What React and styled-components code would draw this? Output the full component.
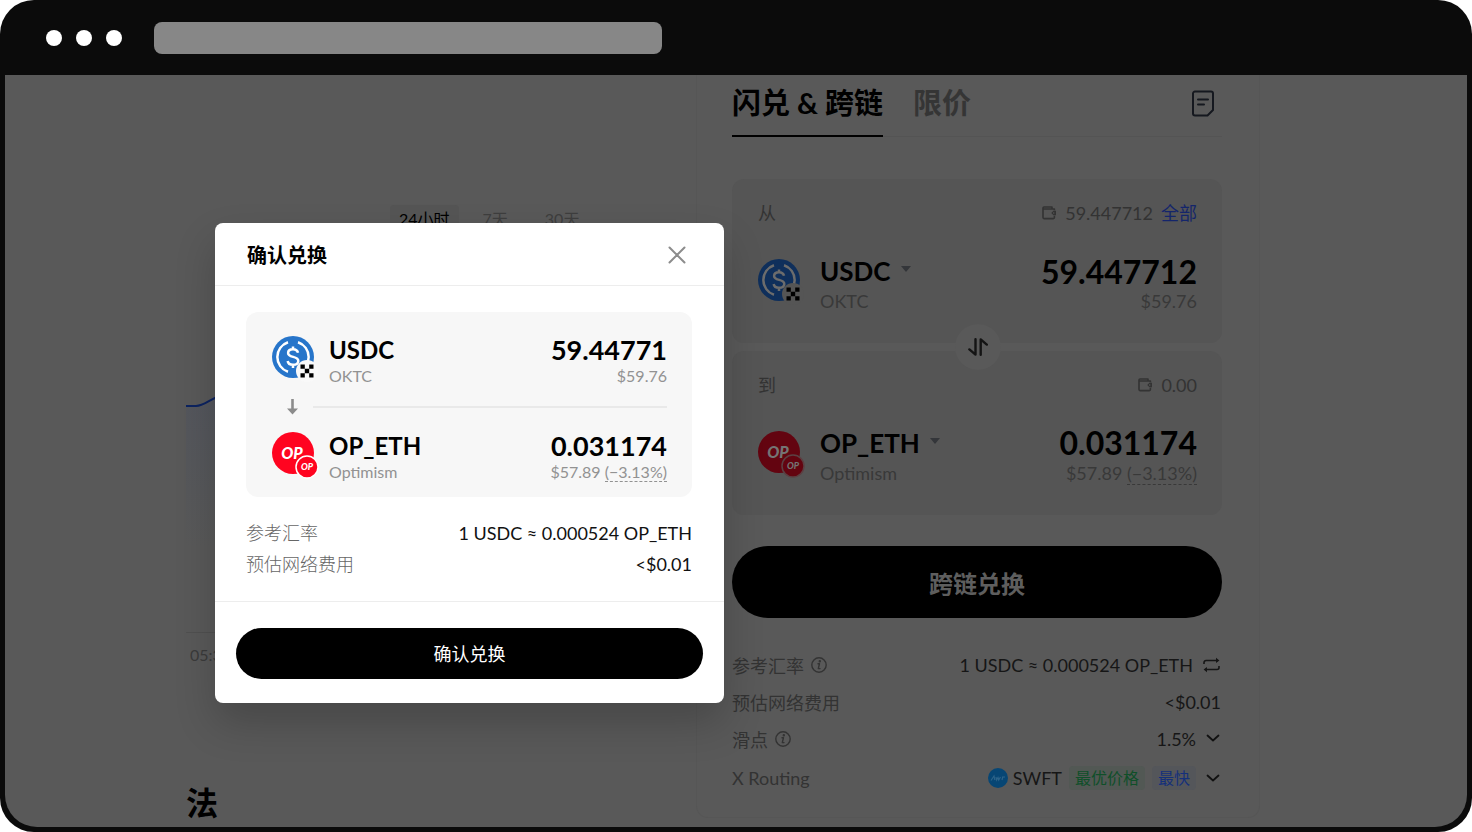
import React, { useState } from 'react';
import styled, { createGlobalStyle } from 'styled-components';

const GlobalStyle = createGlobalStyle`
    * {
        box-sizing: border-box;
    }
    body {
        background: #fff;
        color: #000;
        font-family: Lato, "Noto Sans CJK SC", sans-serif;
        margin: 0;
    }
    button, input {
        background: none;
        border: 0;
        color: inherit;
        font: inherit;
        margin: 0;
        padding: 0;
    }
    button {
        cursor: pointer;
    }
    svg {
        display: block;
        flex: none;
    }
`;

/* Browser frame */
const StyledBrowser = styled.div`
    background: #0b0b0b;
    border-radius: 34px;
    display: flex;
    flex-direction: column;
    height: 100vh;
    overflow: hidden;
    padding: 0 5px 5px;
`;
const StyledTitleBar = styled.header`
    align-items: center;
    display: flex;
    flex: none;
    gap: 14px;
    height: 75px;
    padding-left: 41px;
`;
const StyledDot = styled.span`
    background: #fff;
    border-radius: 50%;
    height: 16px;
    width: 16px;
`;
const StyledAddress = styled.input`
    && {
        background: #878787;
        border-radius: 8px;
        height: 32px;
        margin-left: 18px;
        width: 508px;
    }
`;
const StyledScreen = styled.main`
    background: #595959;
    border-radius: 0 0 32px 32px;
    display: grid;
    flex: 1;
    grid-template-columns: 1fr 564px;
    min-height: 0;
    overflow: hidden;
    padding: 0 207px 0 181px;
    position: relative;
`;

/* Price chart */
const StyledChart = styled.section`
    display: flex;
    flex-direction: column;
    padding-top: 130px;
`;
const StyledPeriods = styled.div`
    display: flex;
    gap: 11px;
    margin-bottom: 129px;
    padding-left: 204px;
`;
const StyledPeriod = styled.button`
    && {
        background: ${props => (props.$active ? '#555' : 'none')};
        border-radius: 4px;
        color: ${props => (props.$active ? '#000' : '#3e3e3e')};
        font-size: 16px;
        line-height: 28px;
        padding: 0 ${props => (props.$active ? 9 : 13)}px;
    }
`;
const StyledAxis = styled.div`
    border-top: 1px solid #505050;
    color: #3b3b3b;
    display: flex;
    font-size: 16px;
    justify-content: space-between;
    line-height: 24px;
    padding: 10px 4px 0;
`;
const StyledHeading = styled.h2`
    font-size: 32px;
    font-weight: 700;
    line-height: 40px;
    margin: 116px 0 0;
`;

/* Swap widget */
const StyledWidget = styled.section`
    align-self: start;
    border: 1px solid #565656;
    border-radius: 0 0 12px 12px;
    border-top: 0;
    padding: 0 37px 18px 35px;
`;
const StyledTabs = styled.div`
    align-items: flex-start;
    border-bottom: 1px solid #545454;
    display: flex;
    gap: 30px;
    padding-top: 10px;
`;
const StyledTab = styled.button`
    && {
        border-bottom: 2px solid ${props => (props.$active ? '#000' : 'transparent')};
        color: ${props => (props.$active ? '#000' : '#353535')};
        font-size: 29px;
        font-weight: 700;
        line-height: 36px;
        margin-bottom: -1px;
        padding-bottom: 14px;
    }
`;
const StyledOrders = styled.button`
    && {
        margin: 5px 8px 0 auto;
    }
`;
const StyledPanels = styled.div`
    display: flex;
    flex-direction: column;
    gap: 8px;
    padding-top: 42px;
    position: relative;
`;
const StyledPanel = styled.div`
    background: #555;
    border-radius: 12px;
    padding: 22px 25px 28px 26px;
`;
const StyledPanelTop = styled.div`
    align-items: center;
    color: #333;
    display: flex;
    font-size: 18px;
    justify-content: space-between;
    line-height: 24px;
    margin-bottom: 30px;
`;
const StyledBalance = styled.span`
    align-items: center;
    display: flex;
    gap: 8px;
`;
const StyledAll = styled.button`
    && {
        color: #14256b;
    }
`;
const StyledSwitch = styled.button`
    && {
        align-items: center;
        background: #595959;
        border-radius: 50%;
        display: flex;
        height: 46px;
        justify-content: center;
        left: calc(50% - 22px);
        position: absolute;
        top: 187px;
        width: 46px;
    }
`;
const StyledSubmit = styled.button`
    && {
        background: #000;
        border-radius: 36px;
        color: #5e5e5e;
        font-size: 24px;
        font-weight: 700;
        height: 72px;
        margin: 31px 0 28px;
        width: 100%;
    }
`;
const StyledInfoRow = styled.div`
    align-items: center;
    color: #333;
    display: flex;
    font-size: 18px;
    height: 37px;
    justify-content: space-between;

    &:last-child {
        height: 42px;
    }
`;
const StyledInfoLabel = styled.span`
    align-items: center;
    display: flex;
    gap: 7px;
`;
const StyledInfoValue = styled.span`
    align-items: center;
    color: #161616;
    display: flex;
    gap: 10px;
    padding-right: ${props => (props.$icon ? 2 : 1)}px;

    button {
        align-items: center;
        display: flex;
        gap: 10px;
    }
`;
const StyledRoute = styled.span`
    align-items: center;
    display: flex;
    gap: 7px;
`;
const StyledProvider = styled.span`
    align-items: center;
    display: flex;
    gap: 5px;
`;
const StyledTag = styled.span`
    background: ${props => props.$background};
    border-radius: 4px;
    color: ${props => props.$color};
    font-size: 16px;
    line-height: 24px;
    padding: 0 6px;
`;

/* Token line, used by the widget and by the dialog */
const StyledToken = styled.div`
    display: flex;
    gap: ${props => (props.$large ? 20 : 15)}px;
`;
const StyledTokenIcon = styled.div`
    padding-top: ${props => (props.$large ? 4 : 0)}px;
    width: 42px;

    svg {
        overflow: visible;
    }
`;
const StyledTokenText = styled.div`
    align-items: ${props => (props.$end ? 'flex-end' : 'flex-start')};
    display: flex;
    flex: 1;
    flex-direction: column;
    min-width: 0;
`;
const StyledName = styled.span`
    align-items: center;
    display: flex;
    font-size: ${props => (props.$large ? 26 : 24)}px;
    font-weight: 700;
    gap: 10px;
    line-height: ${props => (props.$large ? 32 : 28)}px;
`;
const StyledAmount = styled.span`
    font-size: ${props => (props.$large ? 32 : 27)}px;
    font-weight: 700;
    line-height: ${props => (props.$large ? 32 : 28)}px;

    input {
        display: block;
        height: 32px;
        text-align: right;
        width: 200px;
    }
`;
const StyledSub = styled.span`
    color: ${props => (props.$large ? '#393939' : '#929292')};
    font-size: ${props => (props.$large ? 18 : 16)}px;
    line-height: ${props => (props.$large ? 28 : 24)}px;
`;
const StyledChange = styled.span`
    border-bottom: 1px dashed currentColor;
`;

/* Confirm dialog */
const StyledDialog = styled.div`
    background: #fff;
    border-radius: 8px;
    box-shadow: 0 20px 40px rgba(0, 0, 0, 0.2);
    left: 210px;
    position: absolute;
    top: 148px;
    width: 509px;
`;
const StyledDialogHeader = styled.div`
    align-items: center;
    border-bottom: 1px solid #ededed;
    display: flex;
    height: 63px;
    justify-content: space-between;
    padding: 2px 38px 0 32px;

    h3 {
        font-size: 20px;
        font-weight: 700;
        line-height: 28px;
        margin: 0;
    }
`;
const StyledDialogBody = styled.div`
    padding: 26px 32px 21px 31px;
`;
const StyledSummary = styled.div`
    background: #f7f7f7;
    border-radius: 12px;
    margin-bottom: 21px;
    padding: 24px 25px 13px 26px;
`;
const StyledDivider = styled.div`
    align-items: center;
    display: flex;
    gap: 14px;
    height: 44px;
    padding: 0 0 6px 14px;

    &::after {
        background: #e9e9e9;
        content: '';
        flex: 1;
        height: 2px;
    }
`;
const StyledDialogRow = styled.div`
    color: #111;
    display: flex;
    font-size: 18px;
    justify-content: space-between;
    line-height: 31px;
`;
const StyledDialogLabel = styled.span`
    color: #666;
    font-weight: 300;
`;
const StyledDialogFooter = styled.div`
    border-top: 1px solid #ededed;
    padding: 26px 21px 24px;
`;
const StyledConfirm = styled.button`
    && {
        background: #000;
        border-radius: 26px;
        color: #fff;
        font-size: 18px;
        height: 51px;
        padding-bottom: 2px;
        width: 100%;
    }
`;

const CloseIcon = () => (
    <svg width="18" height="18" viewBox="0 0 18 18" fill="none" stroke="#8c8c8c" strokeWidth="2" strokeLinecap="round">
        <path d="M1.5 1.5l15 15M16.5 1.5l-15 15" />
    </svg>
);

const OrdersIcon = () => (
    <svg width="22" height="27" viewBox="0 0 22 27" fill="none" stroke="#15181f" strokeWidth="2" strokeLinecap="round" strokeLinejoin="round">
        <path d="M3 1.5h16a2 2 0 0 1 2 2V20l-5.5 5.5H3a2 2 0 0 1-2-2v-20a2 2 0 0 1 2-2z" />
        <path d="M6 9.5h10M6 14.5h6" />
    </svg>
);

const WalletIcon = () => (
    <svg width="15" height="14" viewBox="0 0 15 14" fill="none" stroke="#333" strokeWidth="1.6" strokeLinejoin="round">
        <path d="M12.4 4.2V3H10V1H2a1 1 0 0 0-1 1v9.6a1 1 0 0 0 1 1h9.4a1 1 0 0 0 1-1V9.8M1.3 3H10" />
        <path d="M14 4.8h-2.6L9.3 7l2.1 2.2H14z" fill="#333" stroke="none" />
        <circle cx="11.7" cy="7" r=".8" fill="#555" stroke="none" />
    </svg>
);

const SwitchIcon = () => (
    <svg width="20" height="18" viewBox="0 0 20 18" fill="none" stroke="#141414" strokeWidth="2.4" strokeLinecap="round" strokeLinejoin="round">
        <path d="M7.5 1.2v15.4L1.4 11.4" />
        <path d="M12.7 16.8V1.4l6.1 5.2" />
    </svg>
);

const InfoIcon = () => (
    <svg width="16" height="16" viewBox="0 0 16 16" fill="none" stroke="#333" strokeWidth="1.4" strokeLinecap="round" strokeLinejoin="round">
        <circle cx="8" cy="8" r="7.2" />
        <path d="M7 6.7h1.5L7.3 11.6H9" />
        <circle cx="8.8" cy="4.3" r=".5" fill="#333" />
    </svg>
);

const RefreshIcon = () => (
    <svg width="17" height="16" viewBox="0 0 17 16" fill="none" stroke="#161616" strokeWidth="1.6" strokeLinejoin="round">
        <path d="M1 7V5.5a2 2 0 0 1 2-2h12" />
        <path d="M16 9v1.5a2 2 0 0 1-2 2H2" />
        <path d="M13 .8l3.4 2.7L13 6zM4 10L.6 12.5 4 15.2z" fill="#161616" stroke="none" />
    </svg>
);

const ChevronIcon = () => (
    <svg width="14" height="9" viewBox="0 0 14 9" fill="none" stroke="#111" strokeWidth="1.8" strokeLinecap="round" strokeLinejoin="round">
        <path d="M1.5 1.5L7 6.5l5.5-5" />
    </svg>
);

const CaretIcon = () => (
    <svg width="10" height="12" viewBox="0 0 10 12" fill="#34363a">
        <path d="M0 1h10L5 7z" />
    </svg>
);

const ArrowDownIcon = () => (
    <svg width="13" height="16" viewBox="0 0 13 16" fill="#8c8c8c">
        <path d="M5.2 0h2.6v9.5H12L6.5 15.5 1 9.5h4.2z" />
    </svg>
);

const UsdcIcon = ({ dim }) => (
    <svg width="42" height="42" viewBox="0 0 42 42" role="img" aria-label="USDC">
        <circle cx="21" cy="21" r="21" fill={dim ? '#0f2f5b' : '#2775ca'} />
        <g fill="none" stroke={dim ? '#6c6c6c' : '#fff'} strokeWidth="2.5">
            <path d="M16 6.2a15.6 15.6 0 0 0 0 29.600M26 6.2a15.6 15.6 0 0 1 0 29.6" />
            <path d="M26 16.8c-.5-2.3-2.2-3.6-5-3.6-3 0-4.9 1.5-4.9 3.800 0 5.400 10.200 2.400 10.200 8 0 2.400-2.100 3.800-5.300 3.800-3 0-5-1.300-5.300-3.800M21 10.500v3M21 28.500v3.500" />
        </g>
        <circle cx="35" cy="35" r="11" fill={dim ? '#555' : '#f9f9f9'} />
        <path d="M28.500 28.500h4.300v4.300h-4.300zM37.200 28.500h4.300v4.300h-4.300zM32.800 32.800h4.400v4.400h-4.400zM28.500 37.200h4.300v4.300h-4.300zM37.200 37.200h4.300v4.300h-4.300z" />
    </svg>
);

const OpIcon = ({ dim }) => {
    const red = dim ? '#630410' : '#ff0420';
    const white = dim ? '#747474' : '#fff';

    return (
        <svg width="42" height="42" viewBox="0 0 42 42" role="img" aria-label="Optimism" fontFamily="Lato, sans-serif" fontStyle="italic" fontWeight="900" textAnchor="middle">
            <circle cx="21" cy="21" r="21" fill={red} />
            <text x="20" y="27" fontSize="16" fill={white}>OP</text>
            <circle cx="35" cy="35" r="11" fill={red} stroke={dim ? '#5c4043' : '#fff'} strokeWidth="1.5" />
            <text x="35" y="38" fontSize="9" fill={white}>OP</text>
        </svg>
    );
};

const SwftIcon = () => (
    <svg width="20" height="20" viewBox="0 0 20 20">
        <circle cx="10" cy="10" r="10" fill="#074674" />
        <path d="M3 12.5l3-4.500.8 4M8 9l.5 3 1.500-2.500.7 2.500L12.500 9M14.800 9l-.8 3M14 9h3" fill="none" stroke="#2c6389" strokeWidth="1.2" />
    </svg>
);

const PriceLine = () => (
    <svg width="510" height="270" viewBox="0 0 510 270">
        <defs>
            <linearGradient id="area" x1="0" y1="0" x2="0" y2="1">
                <stop offset="0" stopColor="#53565d" />
                <stop offset="1" stopColor="#595959" />
            </linearGradient>
        </defs>
        <path d="M0 44h10c7 0 12-5 19-8l30-20 80 22 90-12 90 25 100-30 91 15v150H0z" fill="url(#area)" />
        <path d="M0 44h10c7 0 12-5 19-8l30-20 80 22 90-12 90 25 100-30 91 15" fill="none" stroke="#0c2360" strokeWidth="2" />
    </svg>
);

const Change = () => <>$57.89 <StyledChange>(−3.13%)</StyledChange></>;

const Token = ({ large, icon, name, network, amount, value }) => (
    <StyledToken $large={large}>
        <StyledTokenIcon $large={large}>{icon}</StyledTokenIcon>
        <StyledTokenText>
            {large ?
                <StyledName as="button" $large>{name}<CaretIcon /></StyledName>
                :
                <StyledName>{name}</StyledName>
            }
            <StyledSub $large={large}>{network}</StyledSub>
        </StyledTokenText>
        <StyledTokenText $end>
            <StyledAmount $large={large}>{amount}</StyledAmount>
            <StyledSub $large={large}>{value}</StyledSub>
        </StyledTokenText>
    </StyledToken>
);

const SwapWidget = () => {
    const [amount, setAmount] = useState('59.447712');

    return (
        <StyledWidget>
            <StyledTabs>
                <StyledTab $active>闪兑 &amp; 跨链</StyledTab>
                <StyledTab>限价</StyledTab>
                <StyledOrders aria-label="订单"><OrdersIcon /></StyledOrders>
            </StyledTabs>
            <StyledPanels>
                <StyledPanel>
                    <StyledPanelTop>
                        <label htmlFor="from-amount">从</label>
                        <StyledBalance>
                            <WalletIcon />59.447712
                            <StyledAll>全部</StyledAll>
                        </StyledBalance>
                    </StyledPanelTop>
                    <Token
                        large
                        icon={<UsdcIcon dim />}
                        name="USDC"
                        network="OKTC"
                        amount={<input id="from-amount" value={amount} onChange={e => setAmount(e.target.value)} />}
                        value="$59.76"
                    />
                </StyledPanel>
                <StyledPanel>
                    <StyledPanelTop>
                        <span>到</span>
                        <StyledBalance><WalletIcon />0.00</StyledBalance>
                    </StyledPanelTop>
                    <Token
                        large
                        icon={<OpIcon dim />}
                        name="OP_ETH"
                        network="Optimism"
                        amount="0.031174"
                        value={<Change />}
                    />
                </StyledPanel>
                <StyledSwitch aria-label="切换"><SwitchIcon /></StyledSwitch>
            </StyledPanels>
            <StyledSubmit>跨链兑换</StyledSubmit>
            <StyledInfoRow>
                <StyledInfoLabel>参考汇率<InfoIcon /></StyledInfoLabel>
                <StyledInfoValue $icon>1 USDC ≈ 0.000524 OP_ETH<RefreshIcon /></StyledInfoValue>
            </StyledInfoRow>
            <StyledInfoRow>
                <StyledInfoLabel>预估网络费用</StyledInfoLabel>
                <StyledInfoValue>&lt;$0.01</StyledInfoValue>
            </StyledInfoRow>
            <StyledInfoRow>
                <StyledInfoLabel>滑点<InfoIcon /></StyledInfoLabel>
                <StyledInfoValue $icon><button>1.5%<ChevronIcon /></button></StyledInfoValue>
            </StyledInfoRow>
            <StyledInfoRow>
                <StyledInfoLabel>X Routing</StyledInfoLabel>
                <StyledInfoValue $icon>
                    <button>
                        <StyledRoute>
                            <StyledProvider><SwftIcon />SWFT</StyledProvider>
                            <StyledTag $background="#525854" $color="#0f4f29">最优价格</StyledTag>
                            <StyledTag $background="#54565a" $color="#14307a">最快</StyledTag>
                        </StyledRoute>
                        <ChevronIcon />
                    </button>
                </StyledInfoValue>
            </StyledInfoRow>
        </StyledWidget>
    );
};

const ConfirmDialog = () => (
    <StyledDialog role="dialog" aria-labelledby="confirm-title">
        <StyledDialogHeader>
            <h3 id="confirm-title">确认兑换</h3>
            <button aria-label="关闭"><CloseIcon /></button>
        </StyledDialogHeader>
        <StyledDialogBody>
            <StyledSummary>
                <Token icon={<UsdcIcon />} name="USDC" network="OKTC" amount="59.44771" value="$59.76" />
                <StyledDivider><ArrowDownIcon /></StyledDivider>
                <Token icon={<OpIcon />} name="OP_ETH" network="Optimism" amount="0.031174" value={<Change />} />
            </StyledSummary>
            <StyledDialogRow>
                <StyledDialogLabel>参考汇率</StyledDialogLabel>
                <span>1 USDC ≈ 0.000524 OP_ETH</span>
            </StyledDialogRow>
            <StyledDialogRow>
                <StyledDialogLabel>预估网络费用</StyledDialogLabel>
                <span>&lt;$0.01</span>
            </StyledDialogRow>
        </StyledDialogBody>
        <StyledDialogFooter>
            <StyledConfirm>确认兑换</StyledConfirm>
        </StyledDialogFooter>
    </StyledDialog>
);

const App = () => (
    <>
        <GlobalStyle />
        <StyledBrowser>
            <StyledTitleBar>
                <StyledDot />
                <StyledDot />
                <StyledDot />
                <StyledAddress aria-label="地址栏" />
            </StyledTitleBar>
            <StyledScreen>
                <StyledChart>
                    <StyledPeriods>
                        <StyledPeriod $active>24小时</StyledPeriod>
                        <StyledPeriod>7天</StyledPeriod>
                        <StyledPeriod>30天</StyledPeriod>
                    </StyledPeriods>
                    <PriceLine />
                    <StyledAxis><span>05:30</span></StyledAxis>
                    <StyledHeading>法</StyledHeading>
                </StyledChart>
                <SwapWidget />
                <ConfirmDialog />
            </StyledScreen>
        </StyledBrowser>
    </>
);

export default App;
